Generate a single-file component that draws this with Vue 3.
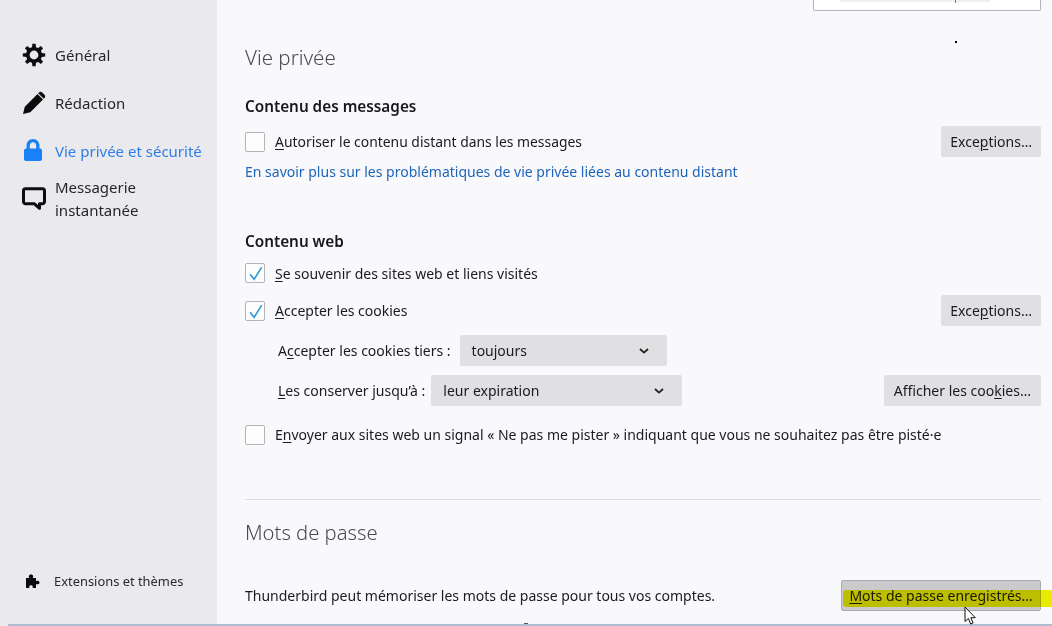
<script setup>
const navItems = [
  { id: 'gear', label: 'Général' },
  { id: 'pen', label: 'Rédaction' },
  { id: 'lock', label: 'Vie privée et sécurité', active: true },
];
const gearTeeth = [0, 45, 90, 135, 180, 225, 270, 315];
</script>

<template>
  <div class="page">
    <aside class="sidebar">
      <nav class="nav">
        <a v-for="item in navItems" :key="item.id" class="nav-item" :class="{ active: item.active }">
          <svg v-if="item.id === 'gear'" class="nav-icon" viewBox="0 0 24 24">
            <circle cx="12" cy="12" r="6.200" fill="none" stroke="#0c0c0d" stroke-width="3.600"/>
            <path v-for="a in gearTeeth" :key="a" :transform="`rotate(${a} 12 12)`" fill="#0c0c0d" d="M9.800 6.500L10.400 .8h3.200l.6 5.700z"/>
          </svg>
          <svg v-else-if="item.id === 'pen'" class="nav-icon" viewBox="0 0 24 24">
            <path fill="#0c0c0d" d="M1 23l1.800-7.300L15.500 3l5.500 5.500L8.300 21.200zM17 1.600c1-1 2.200-1 3.200-.1l2.300 2.300c1 1 .9 2.200 0 3.200L21.800 7.800 16.200 2.300z"/>
          </svg>
          <svg v-else class="nav-icon" viewBox="0 0 24 24">
            <path transform="translate(0 -1)" fill="#1a80f5" d="M11 1c-4 0-6.500 3-6.500 7v2.500H4c-1.200 0-2 1-2 2V21c0 1.200.8 2 2 2h14c1.200 0 2-.8 2-2v-8.500c0-1-.8-2-2-2h-.5V8c0-4-2.500-7-6.500-7zm0 3.300c2 0 3.200 1.600 3.200 3.800v2.400H7.800V8.100c0-2.200 1.200-3.800 3.200-3.800z"/>
          </svg>
          <span>{{ item.label }}</span>
        </a>
        <a class="nav-item two-line">
          <svg class="nav-icon" viewBox="0 0 24 24">
            <path fill="none" stroke="#0c0c0d" stroke-width="3" stroke-linejoin="round" d="M3.500 1.800h17c1 0 2 .8 2 2v11c0 1-1 2-2 2h-3v4.500l-5-4.500h-9c-1 0-2-1-2-2v-11c0-1.200 1-2 2-2z"/>
          </svg>
          <span>Messagerie<br>instantanée</span>
        </a>
      </nav>
      <a class="ext">
        <svg class="ext-icon" viewBox="0 0 16 16">
          <path fill="#0c0c0d" d="M1 5h3.200C3.500 3.800 3.600 1.500 6 1.500S8.500 3.800 7.800 5H11v3.200c1.200-.8 3.500-.7 3.500 1.300s-2.300 2.200-3.500 1.400V15H7.500c.6-1.200.4-2.800-1.500-2.800S3.900 13.800 4.500 15H1z"/>
        </svg>
        <span>Extensions et thèmes</span>
      </a>
    </aside>

    <main class="main">
      <div class="search-stub"></div>

      <h1 class="title main-title">Vie privée</h1>
      <h2 class="subtitle first">Contenu des messages</h2>
      <div class="row r-remote">
        <label class="check"><span class="box"></span><span><u>A</u>utoriser le contenu distant dans les messages</span></label>
        <button class="btn">Exce<u>p</u>tions…</button>
      </div>
      <a class="link">En savoir plus sur les problématiques de vie privée liées au contenu distant</a>

      <h2 class="subtitle web">Contenu web</h2>
      <div class="row r-visited">
        <label class="check">
          <span class="box"><svg viewBox="0 0 20 20"><path fill="none" stroke="#2f9bd8" stroke-width="1.800" d="M4.500 11.500L9 17 17.500 3.500"/></svg></span>
          <span><u>S</u>e souvenir des sites web et liens visités</span>
        </label>
      </div>
      <div class="row r-cookies">
        <label class="check">
          <span class="box"><svg viewBox="0 0 20 20"><path fill="none" stroke="#2f9bd8" stroke-width="1.800" d="M4.500 11.500L9 17 17.500 3.500"/></svg></span>
          <span><u>A</u>ccepter les cookies</span>
        </label>
        <button class="btn">Exce<u>p</u>tions…</button>
      </div>
      <div class="row indent r-third">
        <span>A<u>c</u>cepter les cookies tiers :</span>
        <div class="select third"><span>toujours</span><svg class="chev" viewBox="0 0 10 6"><path fill="none" stroke="#222" stroke-width="1.800" d="M1 1l4 3.600L9 1"/></svg></div>
      </div>
      <div class="row indent r-keep">
        <span><u>L</u>es conserver jusqu’à :</span>
        <div class="select keep"><span>leur expiration</span><svg class="chev" viewBox="0 0 10 6"><path fill="none" stroke="#222" stroke-width="1.800" d="M1 1l4 3.600L9 1"/></svg></div>
        <button class="btn push">Afficher les coo<u>k</u>ies…</button>
      </div>
      <div class="row r-dnt">
        <label class="check"><span class="box"></span><span>E<u>n</u>voyer aux sites web un signal « Ne pas me pister » indiquant que vous ne souhaitez pas être pisté·e</span></label>
      </div>

      <hr class="sep">

      <h1 class="title pw">Mots de passe</h1>
      <div class="row r-pw">
        <span>Thunderbird peut mémoriser les mots de passe pour tous vos comptes.</span>
        <button class="btn hover"><u>M</u>ots de passe enregistrés…</button>
      </div>
    </main>

    <div class="bottom-line"></div>
    <span class="dot"></span>
    <span class="marker"></span>
    <svg class="cursor" viewBox="0 0 14 20">
      <path fill="#fff" stroke="#111" stroke-width="1" d="M1 1v14.500l3.400-3 2.300 5.500 2.400-1-2.300-5.300h4.500z"/>
    </svg>
  </div>
</template>

<style>
html, body { margin: 0; background: #f9f9fb; }
</style>

<style scoped>
.page {
  position: relative;
  display: flex;
  width: 1052px;
  height: 626px;
  overflow: hidden;
  background: #f9f9fb;
  color: #1a1a1f;
  font-family: "Noto Sans", "Open Sans", sans-serif;
  font-size: 14px;
}
u { text-underline-offset: 2px; text-decoration-thickness: 1px; }

.sidebar {
  display: flex;
  flex-direction: column;
  justify-content: space-between;
  box-sizing: border-box;
  width: 217px;
  flex: none;
  height: 626px;
  padding: 31px 0 36px 22px;
  background: #eaeaee;
}
.nav { display: flex; flex-direction: column; }
.nav-item {
  display: flex;
  align-items: center;
  gap: 9px;
  height: 48px;
  font-size: 15px;
  line-height: 23px;
  color: #26262b;
}
.nav-item.active { color: #2f7de8; }
.two-line { height: 46px; margin-top: 1px; }
.nav-icon { width: 24px; height: 24px; flex: none; }
.ext { display: flex; align-items: center; gap: 13px; padding-left: 3px; font-size: 12.900px; color: #2a2a2e; }
.ext-icon { width: 16px; height: 16px; flex: none; }

.main {
  flex: 1;
  box-sizing: border-box;
  padding: 0 11px 0 28px;
  display: flex;
  flex-direction: column;
  min-width: 0;
}
.search-stub {
  position: relative;
  align-self: flex-end;
  box-sizing: border-box;
  width: 228px;
  height: 11px;
  flex: none;
  background: #fff;
  border: 1px solid #b4b4b8;
  border-top: 0;
  border-radius: 0 0 2px 2px;
}
.search-stub::before {
  content: "";
  position: absolute;
  left: 26px;
  top: 0;
  width: 150px;
  height: 2px;
  background: #efeff1;
}
.search-stub::after {
  content: "";
  position: absolute;
  left: 141px;
  top: 0;
  width: 1px;
  height: 3px;
  background: #77777c;
}
.title { margin: 0; font-size: 20.200px; line-height: 30px; font-weight: 300; color: #4a4a4f; font-family: "Noto Sans", sans-serif; }
.title.main-title { margin-top: 31px; font-size: 20.500px; }
.subtitle { margin: 0; font-size: 15.300px; line-height: 22px; font-weight: 600; color: #17171c; }
.subtitle.first { margin-top: 23px; }
.subtitle.web { margin-top: 48px; }
.row { display: flex; align-items: center; height: 31px; flex: none; white-space: nowrap; }
.check { display: flex; align-items: center; gap: 10px; }
.box {
  box-sizing: border-box;
  width: 20px;
  height: 20px;
  flex: none;
  background: #fdfdfe;
  border: 1px solid #b4b4b8;
  border-radius: 2px;
  display: flex;
}
.box svg { width: 18px; height: 18px; }
.btn {
  margin-left: auto;
  box-sizing: border-box;
  height: 31px;
  padding: 0 9px;
  border: 0;
  border-radius: 2px;
  background: #e0e0e3;
  color: #1a1a1f;
  font: inherit;
  white-space: nowrap;
}
.btn.push { padding: 0 10px; }
.r-remote { margin-top: 9px; justify-content: space-between; font-size: 13.900px; }
.r-remote .btn { font-size: 14px; }
.link { margin-top: 5px; line-height: 20px; color: #1d64bb; }
.r-visited { margin-top: 6px; height: 30px; }
.r-cookies { margin-top: 7px; }
.indent { padding-left: 33px; }
.r-third { margin-top: 9px; gap: 9px; }
.r-keep { margin-top: 9px; gap: 6px; }
.select {
  box-sizing: border-box;
  height: 31px;
  display: flex;
  align-items: center;
  justify-content: space-between;
  padding: 0 18px 0 12px;
  border-radius: 2px;
  background: #e0e0e3;
}
.select.third { width: 207px; }
.select.keep { width: 251px; }
.chev { width: 10px; height: 6px; }
.r-dnt { margin-top: 13px; }
.sep { width: 100%; height: 1px; margin: 49px 0 0; border: 0; background: #dcdce0; flex: none; }
.title.pw { margin-top: 17px; }
.r-pw { margin-top: 33px; }
.btn.hover {
  position: relative;
  width: 200px;
  padding: 0;
  text-align: center;
  background: #cacacd;
  border: 1px solid #ababaf;
}
.btn.hover::after {
  content: "";
  position: absolute;
  left: 1px;
  top: 9px;
  width: 210px;
  height: 17px;
  background: #f0f000;
  mix-blend-mode: multiply;
  border-radius: 3px;
}
.bottom-line { position: absolute; left: 8px; right: 0; bottom: 0; height: 2px; background: #aebbd2; }
.dot { position: absolute; left: 955px; top: 41px; width: 2px; height: 2px; background: #000; }
.marker { position: absolute; left: 524px; top: 623px; width: 4px; height: 1px; background: #555; }
.cursor { position: absolute; left: 964px; top: 606px; width: 14px; height: 20px; }
</style>
